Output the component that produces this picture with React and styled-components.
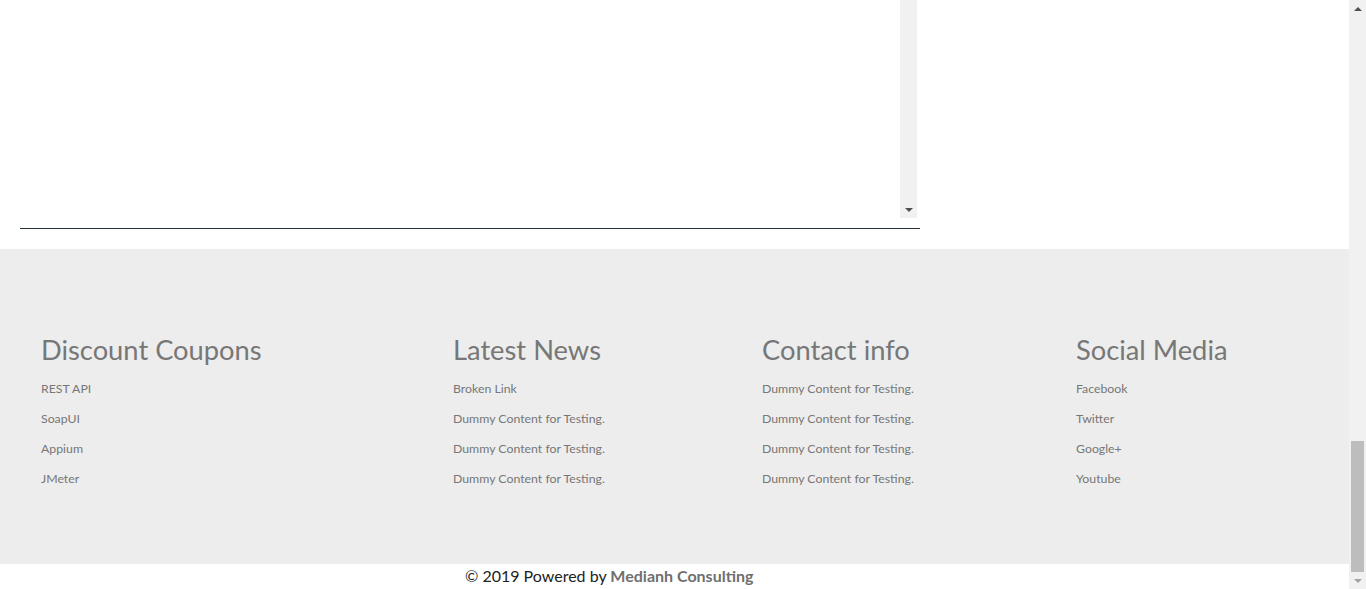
import React from "react";
import styled, { createGlobalStyle } from "styled-components";

const GlobalStyle = createGlobalStyle`
	html, body {
		margin: 0;
		padding: 0;
		overflow: hidden;
		background: #fff;
		font-family: "Trebuchet MS", Lato, "Open Sans", sans-serif;
	}
`

const Shell = styled.div`
	display: flex;
	height: 100vh;
	width: 100%;
`

const Page = styled.div`
	flex: 1;
	display: flex;
	flex-direction: column;
	min-width: 0;
`

const TopSection = styled.div`
	padding: 0 20px 20px;
	background: #fff;
`

const FrameBox = styled.div`
	display: flex;
	width: 897px;
	height: 218px;
	background: #fff;
`

const FrameContent = styled.div`
	flex: 1;
`

const Scrollbar = styled.div`
	width: 17px;
	background: #f1f1f1;
	display: flex;
	flex-direction: column;
	flex-shrink: 0;
`

const ArrowBtn = styled.div`
	height: 17px;
	display: flex;
	align-items: center;
	justify-content: center;
	&::after{
		content: "";
		width: 0;
		height: 0;
		border-left: 4px solid transparent;
		border-right: 4px solid transparent;
		${props => props.up
			? `border-bottom: 4px solid ${props.faded ? "#a3a3a3" : "#505050"};`
			: `border-top: 4px solid ${props.faded ? "#a3a3a3" : "#505050"};`}
	}
`

const Track = styled.div`
	flex: 1;
	display: flex;
	flex-direction: column;
	justify-content: flex-end;
	align-items: center;
`

const Thumb = styled.div`
	width: 13px;
	height: 131px;
	background: #bdbdbd;
`

const Divider = styled.hr`
	width: 900px;
	margin: 10px 0 0;
	border: none;
	border-top: 1px solid #263238;
`

const Footer = styled.footer`
	background: #ededed;
	height: 315px;
	box-sizing: border-box;
	padding: 85px 0 0 41px;
	display: grid;
	grid-template-columns: 412px 309px 314px 1fr;
	align-items: start;
`

const Column = styled.div`
	display: flex;
	flex-direction: column;
	h3{
		margin: 0 0 8px;
		font-size: 27.3px;
		line-height: 32px;
		font-weight: 400;
		color: #777;
		white-space: nowrap;
	}
`

const LinkItem = styled.a`
	font-size: 12.3px;
	line-height: 30px;
	color: #777;
	text-decoration: none;
	white-space: nowrap;
`

const Bottom = styled.div`
	flex: 1;
	background: #fff;
	padding-left: 465px;
	font-size: 16px;
	line-height: 24px;
	color: #222;
	white-space: nowrap;
	b{
		color: #6f6f6f;
		font-weight: 700;
	}
`

const columns = [
	{ title: "Discount Coupons", links: ["REST API", "SoapUI", "Appium", "JMeter"] },
	{ title: "Latest News", links: ["Broken Link", "Dummy Content for Testing.", "Dummy Content for Testing.", "Dummy Content for Testing."] },
	{ title: "Contact info", links: ["Dummy Content for Testing.", "Dummy Content for Testing.", "Dummy Content for Testing.", "Dummy Content for Testing."] },
	{ title: "Social Media", links: ["Facebook", "Twitter", "Google+", "Youtube"] },
]

const App = () => {
	return (
		<Shell>
			<GlobalStyle/>
			<Page>
				<TopSection>
					<FrameBox>
						<FrameContent/>
						<Scrollbar>
							<Track/>
							<ArrowBtn/>
						</Scrollbar>
					</FrameBox>
					<Divider/>
				</TopSection>
				<Footer>
					{columns.map(col => (
						<Column key={col.title}>
							<h3>{col.title}</h3>
							{col.links.map((link, i) => (
								<LinkItem key={i} href="#">{link}</LinkItem>
							))}
						</Column>
					))}
				</Footer>
				<Bottom>© 2019 Powered by <b>Medianh Consulting</b></Bottom>
			</Page>
			<Scrollbar>
				<ArrowBtn up/>
				<Track>
					<Thumb/>
				</Track>
				<ArrowBtn faded/>
			</Scrollbar>
		</Shell>
	)
}

export default App
